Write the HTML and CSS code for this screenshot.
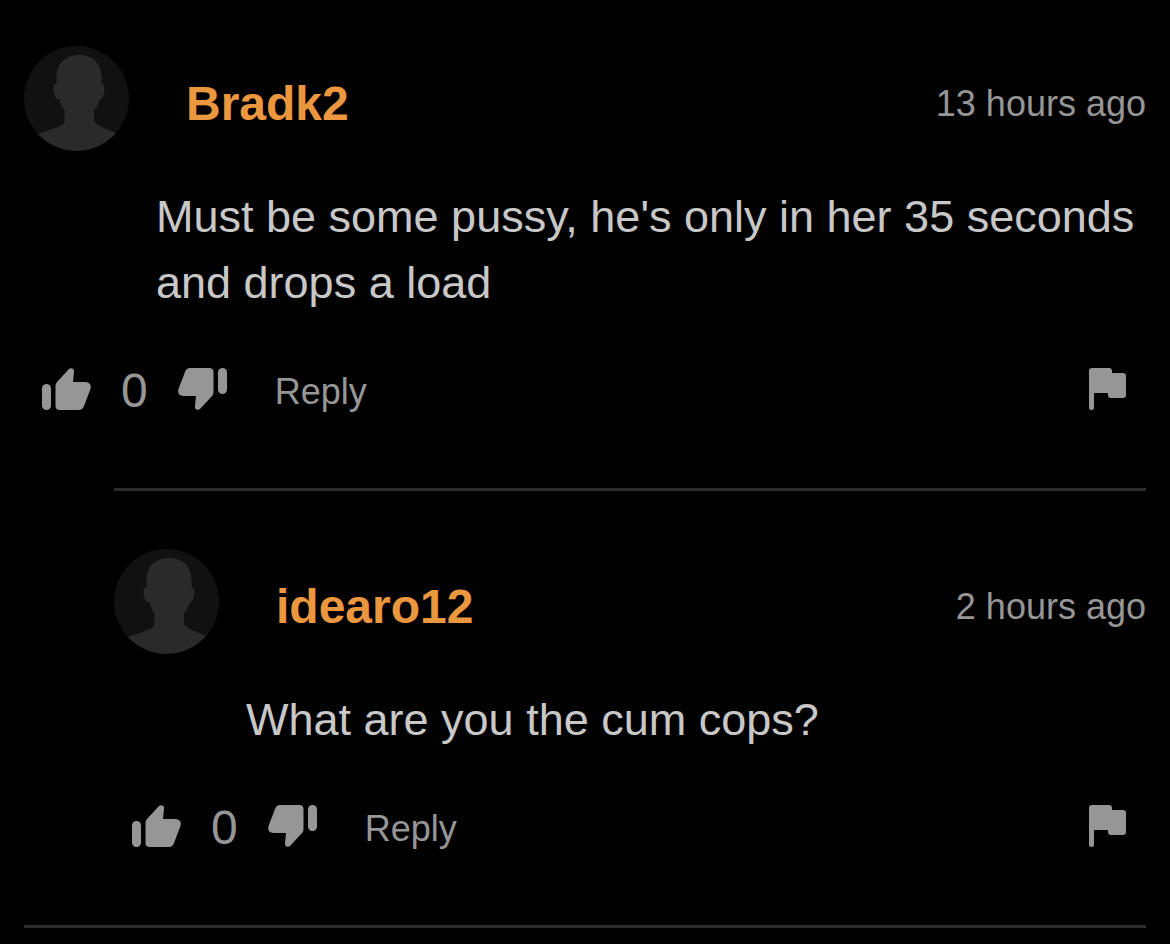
FILE: index.html
```html
<!DOCTYPE html>
<html lang="en">
<head>
<meta charset="utf-8">
<meta name="viewport" content="width=device-width, initial-scale=1">
<title>Comments</title>
<link rel="stylesheet" href="styles.css">
</head>
<body>
<svg class="sprite" aria-hidden="true">
  <symbol id="avatar" viewBox="0 0 105 105">
    <circle cx="52.5" cy="52.5" r="52.5" fill="#111"/>
    <path fill="#2a2a2a" d="M55 9C41 9 32.5 18 32.5 31V38C29 38 29 42 30 47C31 51 33 54 35.5 53C36.5 58 38 61 40.5 64V75C40.500 80 30 82 14 88A52.5 52.5 0 0 0 92 87C80 82 70 78 70 74V64C73 61 74.5 58 75.5 53C78 54 79.5 50 80 46C81 42 80.5 39 77.5 38V31C77.5 18 69 9 55 9Z"/>
  </symbol>
  <symbol id="thumb" viewBox="0 0 49 42">
    <rect y="16" width="9" height="26" rx="4.5"/>
    <path d="M13.500 17.500Q13.500 15.500 15 14L26.500 1.500Q28.500-.5 31 .8Q32.300 1.700 32 4L31 14H43.500Q50 14.500 48.500 21L42 38Q40.500 42 37 42H18Q13.500 42 13.500 38Z"/>
  </symbol>
  <symbol id="flag" viewBox="0 0 37 42">
    <path d="M3 0H20Q23 0 23 3V5H34Q37 5 37 8V27Q37 30 34 30H22Q19 30 19 27V25H5V39.5A2.5 2.5 0 0 1 0 39.5V3Q0 0 3 0Z"/>
  </symbol>
</svg>
<main class="comments">
  <article class="comment">
    <header class="comment-head">
      <svg class="avatar" aria-hidden="true"><use href="#avatar"/></svg>
      <a class="author" href="#">Bradk2</a>
      <time class="age">13 hours ago</time>
    </header>
    <p class="message">Must be some pussy, he's only in her 35 seconds and drops a load</p>
    <footer class="actions">
      <button class="vote" type="button" aria-label="Like"><svg class="thumb"><use href="#thumb"/></svg></button>
      <span class="score">0</span>
      <button class="vote" type="button" aria-label="Dislike"><svg class="thumb thumb-down"><use href="#thumb"/></svg></button>
      <button class="reply" type="button">Reply</button>
      <button class="report" type="button" aria-label="Report"><svg class="flag"><use href="#flag"/></svg></button>
    </footer>
  </article>
  <article class="comment nested">
    <header class="comment-head">
      <svg class="avatar" aria-hidden="true"><use href="#avatar"/></svg>
      <a class="author" href="#">idearo12</a>
      <time class="age">2 hours ago</time>
    </header>
    <p class="message">What are you the cum cops?</p>
    <footer class="actions">
      <button class="vote" type="button" aria-label="Like"><svg class="thumb"><use href="#thumb"/></svg></button>
      <span class="score">0</span>
      <button class="vote" type="button" aria-label="Dislike"><svg class="thumb thumb-down"><use href="#thumb"/></svg></button>
      <button class="reply" type="button">Reply</button>
      <button class="report" type="button" aria-label="Report"><svg class="flag"><use href="#flag"/></svg></button>
    </footer>
  </article>
</main>
</body>
</html>
```
FILE: styles.css
```css
* {
  box-sizing: border-box;
}

body {
  margin: 0;
  background: #010102;
  color: #969696;
  font-family: "Liberation Sans", Arial, sans-serif;
}

.sprite {
  display: none;
}

.comments {
  margin: 46px 24px 0;
  padding-bottom: 12px;
}

.comment {
  padding-bottom: 78px;
}

.nested {
  margin-left: 90px;
  padding-top: 58px;
  border-top: 3px solid #2d2d2d;
}

.comments::after {
  content: "";
  display: block;
  border-top: 3px solid #2d2d2d;
}

.comment-head {
  display: flex;
  align-items: center;
  gap: 57px;
}

.avatar {
  flex: none;
  width: 105px;
  height: 105px;
}

.author {
  padding-top: 10px;
  color: #eb973f;
  font-size: 48px;
  font-weight: 700;
  line-height: 56px;
  text-decoration: none;
}

.age {
  margin-left: auto;
  padding-top: 10px;
  font-size: 36px;
  line-height: 42px;
  white-space: nowrap;
}

.message {
  margin: 33px 0 52px;
  padding-left: 132px;
  color: #c8c8c8;
  font-size: 45px;
  line-height: 66px;
}

.actions {
  display: flex;
  align-items: center;
  height: 42px;
  padding: 0 20px 0 18px;
  gap: 30px;
}

button {
  padding: 0;
  border: 0;
  background: none;
  color: inherit;
  font-family: inherit;
  cursor: pointer;
}

svg {
  display: block;
  fill: currentColor;
}

.thumb {
  width: 49px;
  height: 42px;
}

.thumb-down {
  transform: rotate(180deg);
}

.score {
  padding-top: 4px;
  font-size: 48px;
  line-height: 56px;
}

.reply {
  margin-left: 18px;
  padding-top: 6px;
  font-size: 36px;
  line-height: 42px;
}

.report {
  margin-left: auto;
}

.flag {
  width: 37px;
  height: 42px;
}
```
